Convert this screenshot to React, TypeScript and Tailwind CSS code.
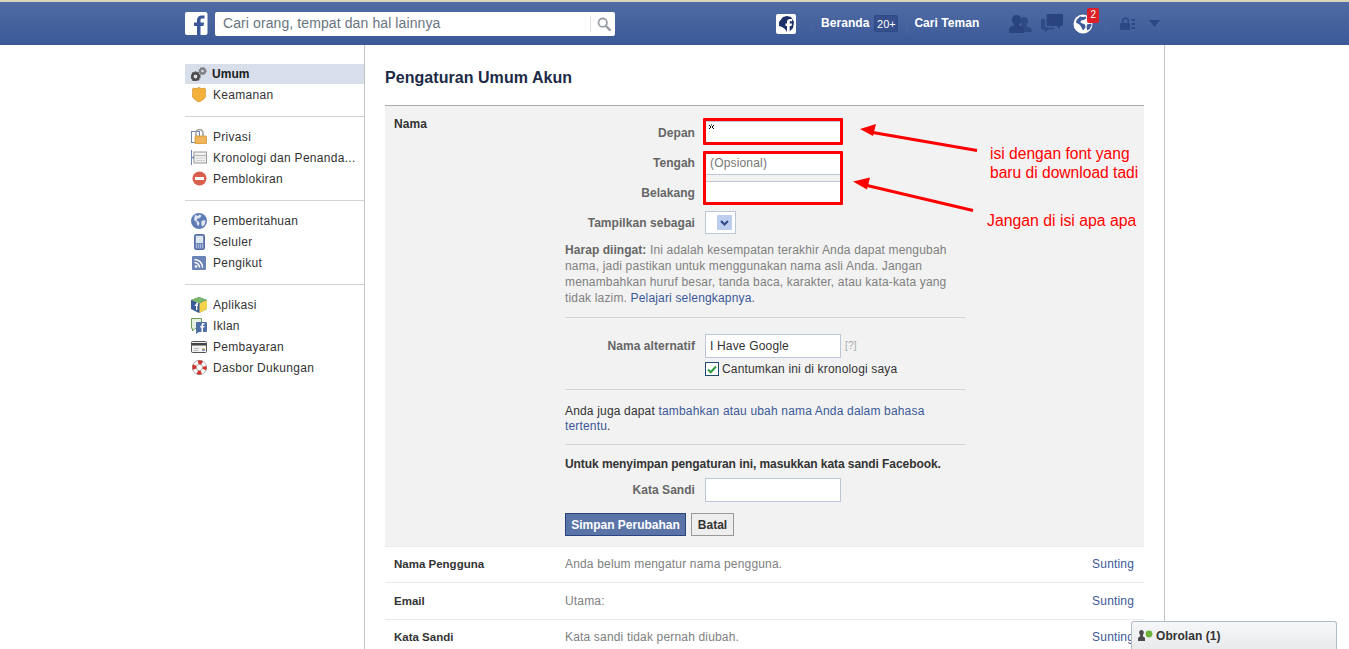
import React from "react";

type IP = { className?: string };

const FbLogo = () => (
  <svg width="23" height="23" viewBox="0 0 23 23" className="shrink-0">
    <rect x="0" y="0" width="22.5" height="23" rx="2" fill="#fff" />
    <path d="M15.5 23v-9h3l.5-3.5h-3.5V8.3c0-1 .3-1.7 1.8-1.7H19.5V3.5c-.4 0-1.500-.1-2.800-.1-2.800 0-4.700 1.700-4.700 4.600v2.500H9V14h3v9z" fill="#3b5998" />
  </svg>
);

const FbGlobe = () => (
  <svg width="20" height="20" viewBox="0 0 20 20" className="shrink-0">
    <rect width="20" height="20" rx="2" fill="#fff" />
    <path d="M3 8l4-5 4-1 4 1 3 5-1 6-3 3-3 1-2-3-3-2-3-1z" fill="#1c2f66" />
    <path d="M11 19v-7H9.500V9.500H11V8c0-2 1.200-3 3-3h2v2.300h-1.300c-.8 0-1 .4-1 1.100v1.100H16l-.4 2.500h-1.900v7z" fill="#fff" />
  </svg>
);

const Friends = () => (
  <svg width="23" height="19" viewBox="0 0 23 19" className="shrink-0">
    <path d="M15 3c2.500 0 4 1.600 4 4 0 1.700-.7 3-1.500 3.800v1.500c2 .8 5 1.500 5 3.700v2H14v-3l-3-2.500c.8-.4 1.500-.8 1.500-1v-1C11.800 10 11 8.700 11 7c0-2.400 1.500-4 4-4z" fill="#2f4a85" />
    <path d="M7.500 1C10.500 1 12 3 12 5.600c0 2-.8 3.400-1.700 4.300v1.700c2.300.9 4.700 1.800 4.700 4.300V19H0v-3.100c0-2.500 2.400-3.400 4.700-4.300V9.900C3.800 9 3 7.600 3 5.600 3 3 4.500 1 7.500 1z" fill="#2a4480" />
  </svg>
);

const Messages = () => (
  <svg width="22" height="20" viewBox="0 0 22 20" className="shrink-0">
    <path d="M7 0h13.500c.8 0 1.500.7 1.500 1.500v9c0 .8-.7 1.500-1.500 1.500H19v3l-3-3H7c-.8 0-1.500-.7-1.500-1.500v-9C5.500.7 6.200 0 7 0z" fill="#2a4480" />
    <path d="M1.500 5H4v6.500C4 12.500 5 13.500 6 13.500h7.500V14c0 .8-.7 1.500-1.500 1.500H7L4 19v-3.500H1.500C.7 15.500 0 14.800 0 14V6.500C0 5.700.7 5 1.500 5z" fill="#2f4a85" />
  </svg>
);

const WhiteGlobe = () => (
  <svg width="20" height="20" viewBox="0 0 20 20" className="shrink-0">
    <circle cx="10" cy="10" r="9.500" fill="#fff" />
    <path d="M7 2.500l3 .5 2.500-.5 1 1.500-2.500 2-3 .5-.5 2 2 1 2.500 1 .5 3-2.500 3-1.500-3-1.500-2.500L3 8.500 3.500 6z" fill="#3f5c9a" />
    <path d="M14 10.500l4-1 .7 1.500-2 4-2.500 1.500-.5-3z" fill="#3f5c9a" />
  </svg>
);

const LockMenu = () => (
  <svg width="16" height="13" viewBox="0 0 16 13" className="shrink-0">
    <path d="M3 6V4a3.500 3.500 0 017 0v2H8.500V4a2 2 0 00-4 0v2z" fill="#2c4884" />
    <rect x="1" y="6" width="10" height="7" rx="1" fill="#2c4884" />
    <path d="M12.500 2H16v2h-3.500zM12.500 6H16v2h-3.500zM12.500 10H16v2h-3.500z" fill="#2c4884" />
  </svg>
);

const Caret = () => (
  <svg width="11" height="7" viewBox="0 0 11 7" className="shrink-0">
    <path d="M0 0h11L5.500 7z" fill="#2c4884" />
  </svg>
);

const SearchIcon = () => (
  <svg width="14" height="14" viewBox="0 0 14 14" className="shrink-0">
    <circle cx="5.700" cy="5.700" r="4.200" fill="none" stroke="#9aa0a8" strokeWidth="1.800" />
    <path d="M8.800 8.800l4 4" stroke="#9aa0a8" strokeWidth="2.400" strokeLinecap="round" />
  </svg>
);

const Gears = () => (
  <svg width="16" height="14" viewBox="0 0 16 14">
    <circle cx="4.500" cy="9.500" r="3.200" fill="none" stroke="#4a4a4a" strokeWidth="2.600" />
    <circle cx="4.500" cy="9.500" r="4.600" fill="none" stroke="#4a4a4a" strokeWidth="1.200" strokeDasharray="1.500 1.400" />
    <circle cx="11.500" cy="4" r="2.400" fill="none" stroke="#7f7f7f" strokeWidth="2.200" />
    <circle cx="11.500" cy="4" r="3.700" fill="none" stroke="#7f7f7f" strokeWidth="1" strokeDasharray="1.300 1.100" />
  </svg>
);

const Shield = () => (
  <svg width="14" height="15" viewBox="0 0 14 15">
    <path d="M1.500 1L4 1.800 7 .5l3 1.300L12.500 1 14 3c-1 1.500-1 2.500-.3 4.500.7 3-2.700 5.500-6.700 7.500-4-2-7.400-4.500-6.700-7.500C1 5.500 1 4.500 0 3z" fill="#f3b13c" stroke="#c98a22" strokeWidth=".7" />
  </svg>
);

const Lock = () => (
  <svg width="16" height="15" viewBox="0 0 16 15">
    <rect x=".5" y="2.500" width="8" height="11" fill="#fff" stroke="#6d84b4" />
    <path d="M5 7V4a3.500 3.500 0 017 0v3" fill="none" stroke="#9a9a9a" strokeWidth="1.500" />
    <rect x="4" y="7" width="11.500" height="8" rx="1" fill="#f0b55a" stroke="#c98a22" strokeWidth=".7" />
  </svg>
);

const Timeline = () => (
  <svg width="16" height="15" viewBox="0 0 16 15">
    <path d="M.5 0v15" stroke="#6d84b4" />
    <rect x="3" y="2" width="12.500" height="11" fill="#f0f0f0" stroke="#999" />
    <path d="M3 5.500h12.500" stroke="#b4b4b4" />
    <path d="M5 8h9M5 10.500h9" stroke="#d0d0d0" />
    <path d="M3 6L.5 7.500 3 9z" fill="#6d84b4" />
  </svg>
);

const Block = () => (
  <svg width="15" height="15" viewBox="0 0 15 15">
    <circle cx="7.500" cy="7.500" r="7" fill="#d9604c" />
    <rect x="3" y="6" width="9" height="3" fill="#fff" />
  </svg>
);

const BlueGlobe = () => (
  <svg width="16" height="16" viewBox="0 0 16 16">
    <circle cx="8" cy="8" r="8" fill="#5f7cb6" />
    <path d="M4 2l3 1 1.500-1.500 2 1L9 5 6.500 5.500 5.500 7.500l2 1 1 2-1 2.500-1.500-1.500L5.500 9 3 7l.5-3zM10.500 8l3-1 1 1.500-1 3.500-2.500 1.500-.7-2.500z" fill="#dfe5f1" />
  </svg>
);

const Phone = () => (
  <svg width="11" height="16" viewBox="0 0 11 16">
    <rect x=".5" y=".5" width="10" height="15" rx="1.500" fill="#6f88bb" stroke="#5a6f9e" />
    <rect x="2" y="2" width="7" height="7" fill="#dfe6f3" />
    <path d="M2 11h7M2 13h7" stroke="#dfe6f3" strokeDasharray="1 1" />
  </svg>
);

const Rss = () => (
  <svg width="14" height="14" viewBox="0 0 14 14">
    <rect width="14" height="14" rx="1" fill="#6b83b6" />
    <circle cx="4" cy="10.500" r="1.300" fill="#fff" />
    <path d="M2.500 6.500a5 5 0 015 5M2.500 3.500a8 8 0 018 8" stroke="#fff" strokeWidth="1.500" fill="none" />
  </svg>
);

const AppCube = () => (
  <svg width="16" height="16" viewBox="0 0 16 16">
    <path d="M8 0l8 3v9l-8 4-8-4V3z" fill="#3a5a9b" />
    <path d="M8 0l8 3-8 3.500L0 3z" fill="#7cb86a" />
    <path d="M8.500 6.500L16 3v9l-7.500 4z" fill="#f5d34a" />
    <path d="M5 13V9H3.800V7.500H5c0-1.500.7-2 2-2v1.300c-.6 0-.7.2-.7.700H7V9h-.7v4z" fill="#fff" />
  </svg>
);

const Ads = () => (
  <svg width="16" height="16" viewBox="0 0 16 16">
    <path d="M.5.500h10v10H4L1.500 13v-2.500h-1z" fill="#e6f0df" stroke="#6f9a58" />
    <rect x="5" y="4" width="11" height="10" rx="1" fill="#4f6ea8" />
    <path d="M5 14v2l3-2z" fill="#4f6ea8" />
    <path d="M10.500 14V9.500H9.300V8h1.200V6.800c0-1.200.8-1.800 1.800-1.800h1.200v1.500h-.8c-.5 0-.7.2-.7.600V8h1.500l-.2 1.500H12V14z" fill="#fff" />
  </svg>
);

const Card = () => (
  <svg width="16" height="12" viewBox="0 0 16 12">
    <rect x=".5" y=".5" width="15" height="11" rx="1" fill="#f2f2f2" stroke="#555" />
    <rect x="1" y="2" width="14" height="2.500" fill="#444" />
    <path d="M3 7.500h5M3 9.500h4" stroke="#bbb" />
    <rect x="11" y="7.500" width="3" height="1" fill="#e4a11b" />
    <rect x="11" y="8.500" width="3" height="1" fill="#2c55a0" />
  </svg>
);

const Lifebuoy = () => (
  <svg width="15" height="15" viewBox="0 0 15 15">
    <circle cx="7.500" cy="7.500" r="5.200" fill="none" stroke="#fff" strokeWidth="4" />
    <circle cx="7.500" cy="7.500" r="5.200" fill="none" stroke="#d8332b" strokeWidth="4" strokeDasharray="4.100 4.070" strokeDashoffset="2.050" />
    <circle cx="7.500" cy="7.500" r="7.200" fill="none" stroke="#666" strokeWidth=".5" />
    <circle cx="7.500" cy="7.500" r="3.200" fill="none" stroke="#666" strokeWidth=".5" />
  </svg>
);

const NavItem = ({ icon, label, active }: { icon: React.ReactNode; label: string; active?: boolean }) => (
  <div className={active ? "flex h-[20px] items-center bg-[#d8dfea] pl-[6px] font-bold tracking-[0.05px] text-[#1c1c1c]" : "flex h-[21px] items-center pl-[6px] text-[#333]"}>
    <span className={active ? "mr-[5px] flex w-[16px] justify-center" : "mr-[6px] flex w-[16px] justify-center"}>{icon}</span>
    <span className="truncate">{label}</span>
  </div>
);

const Hr = ({ className }: IP) => <div className={`h-px bg-[#d3d3d3] ${className ?? ""}`} />;

const inputCls = "block h-[24px] w-[136px] border border-[#bdc7d8] bg-white px-[4px] text-[#333]";

const FormRow = ({ label, children }: { label: string; children: React.ReactNode }) => (
  <div className="flex items-center">
    <div className="w-[130px] text-right font-bold tracking-[0.05px] text-[#666]">{label}</div>
    <div className="ml-[10px]">{children}</div>
  </div>
);

const InfoRow = ({ label, value, className }: { label: string; value: string; className: string }) => (
  <div className={`flex items-center border-b border-[#e9e9e9] pl-[9px] pr-[10px] ${className}`}>
    <div className="w-[171px] text-[11.500px] font-bold tracking-normal text-[#333]">{label}</div>
    <div className="flex-1 text-[#808080]">{value}</div>
    <div className="text-[#3b5998]">Sunting</div>
  </div>
);

export default function App() {
  return (
    <div className="relative h-[649px] w-full overflow-hidden bg-white text-[12px] leading-[16px] tracking-[0.17px] [font-family:'Liberation_Sans',Arial,sans-serif]">
      <header className="flex h-[45px] items-center border-t-2 border-[#d8d6bd] bg-gradient-to-b from-[#516ca4] to-[#3b5998] pl-[185px]">
        <FbLogo />
        <div className="ml-[7px] flex h-[24px] w-[400px] items-center rounded-[2px] bg-white pl-[8px] pr-[1px]">
          <span className="flex-1 pb-[2px] text-[14px] tracking-[0.1px] text-[#6a7480]">Cari orang, tempat dan hal lainnya</span>
          <span className="flex h-[16px] items-center border-l border-[#e0e0e0] pl-[6px] pr-[3px]"><SearchIcon /></span>
        </div>
        <div className="ml-[161px]"><FbGlobe /></div>
        <div className="ml-[15px] h-[20px] w-px bg-[#4a66a0]" />
        <span className="ml-[9px] pb-[2px] font-bold tracking-[0.05px] text-white">Beranda</span>
        <span className="ml-[5px] flex h-[17px] w-[24px] items-center justify-center rounded-[2px] border border-[#2f4a86] bg-[#344f8c] text-[11px] tracking-normal text-white">20+</span>
        <div className="ml-[8px] h-[20px] w-px bg-[#4a66a0]" />
        <span className="ml-[7px] pb-[2px] font-bold tracking-[0.05px] text-white">Cari Teman</span>
        <div className="ml-[30px]"><Friends /></div>
        <div className="ml-[9px]"><Messages /></div>
        <div className="relative ml-[10px]">
          <WhiteGlobe />
          <span className="absolute left-[14px] top-[-6px] flex h-[15px] w-[12px] items-center justify-center rounded-[2px] bg-[#dd2027] text-[10px] tracking-normal text-white">2</span>
        </div>
        <div className="ml-[12px] h-[20px] w-px bg-[#4a66a0]" />
        <div className="ml-[13px]"><LockMenu /></div>
        <div className="ml-[14px]"><Caret /></div>
      </header>

      <div className="flex pl-[185px]">
        <aside className="w-[179px] pt-[19px] tracking-[0.3px]">
          <NavItem active icon={<Gears />} label="Umum" />
          <NavItem icon={<Shield />} label="Keamanan" />
          <Hr className="mt-[11px] mb-[9px]" />
          <NavItem icon={<Lock />} label="Privasi" />
          <NavItem icon={<Timeline />} label="Kronologi dan Penanda..." />
          <NavItem icon={<Block />} label="Pemblokiran" />
          <Hr className="mt-[11px] mb-[9px]" />
          <NavItem icon={<BlueGlobe />} label="Pemberitahuan" />
          <NavItem icon={<Phone />} label="Seluler" />
          <NavItem icon={<Rss />} label="Pengikut" />
          <Hr className="mt-[11px] mb-[9px]" />
          <NavItem icon={<AppCube />} label="Aplikasi" />
          <NavItem icon={<Ads />} label="Iklan" />
          <NavItem icon={<Card />} label="Pembayaran" />
          <NavItem icon={<Lifebuoy />} label="Dasbor Dukungan" />
        </aside>

        <main className="h-[604px] w-[801px] border-x border-[#c4c4c4] px-[20px]">
          <h1 className="h-[60px] pt-[21px] text-[16px] font-bold leading-[24px] tracking-[0.05px] text-[#1c2a47]">Pengaturan Umum Akun</h1>

          <section className="flex h-[442px] border-y border-t-[#aaaaaa] border-b-[#e9e9e9] bg-[#f2f2f2] pl-[9px] pt-[10px]">
            <div className="w-[171px] font-bold tracking-[0.05px] text-[#333]">Nama</div>
            <div className="w-[400px] pt-[5px]">
              <div className="flex flex-col gap-[6px]">
                <FormRow label="Depan"><div className={inputCls} /></FormRow>
                <FormRow label="Tengah"><div className={`${inputCls} leading-[22px] text-[#777]`}>(Opsional)</div></FormRow>
                <FormRow label="Belakang"><div className={inputCls} /></FormRow>
                <FormRow label="Tampilkan sebagai">
                  <div className="flex h-[23px] w-[31px] items-center justify-end border border-[#bdc7d8] bg-white pr-[3px]">
                    <span className="flex h-[15px] w-[15px] items-center justify-center rounded-[1px] bg-[#bccdee]">
                      <svg width="9" height="6" viewBox="0 0 9 6"><path d="M1 1l3.500 3.500L8 1" fill="none" stroke="#2f4a86" strokeWidth="2" /></svg>
                    </span>
                  </div>
                </FormRow>
              </div>

              <p className="mt-[8px] text-[#808080]"><b className="tracking-[0.05px] text-[#666]">Harap diingat:</b> Ini adalah kesempatan terakhir Anda dapat mengubah nama, jadi pastikan untuk menggunakan nama asli Anda. Jangan menambahkan huruf besar, tanda baca, karakter, atau kata-kata yang tidak lazim. <span className="text-[#3b5998]">Pelajari selengkapnya.</span></p>
              <Hr className="mt-[11px] mb-[16px]" />

              <div className="flex items-center">
                <div className="w-[130px] text-right font-bold tracking-[0.05px] text-[#666]">Nama alternatif</div>
                <div className={`ml-[10px] ${inputCls} leading-[22px]`}>I Have Google</div>
                <span className="ml-[4px] text-[10px] text-[#aaa]">[?]</span>
              </div>
              <div className="ml-[140px] mt-[3px] flex h-[16px] items-center">
                <span className="flex h-[14px] w-[14px] items-center justify-center border border-[#1f4a77] bg-white">
                  <svg width="10" height="9" viewBox="0 0 10 9"><path d="M1 4.500l2.700 2.700L9 1.500" fill="none" stroke="#2b9a3a" strokeWidth="2" /></svg>
                </span>
                <span className="ml-[3px] whitespace-nowrap text-[#333]">Cantumkan ini di kronologi saya</span>
              </div>
              <Hr className="mt-[12px] mb-[14px]" />

              <p className="leading-[15px] text-[#333]">Anda juga dapat <span className="text-[#3b5998]">tambahkan atau ubah nama Anda dalam bahasa tertentu</span>.</p>
              <Hr className="mt-[10px] mb-[11px]" />

              <p className="whitespace-nowrap font-bold tracking-[-0.07px] text-[#333]">Untuk menyimpan pengaturan ini, masukkan kata sandi Facebook.</p>
              <div className="mt-[6px]">
                <FormRow label="Kata Sandi"><div className={inputCls} /></FormRow>
              </div>
              <div className="mt-[11px] flex gap-[5px]">
                <button className="h-[23px] w-[121px] border border-[#29447e] bg-[#5b74a8] font-bold tracking-normal text-white">Simpan Perubahan</button>
                <button className="h-[23px] w-[43px] border border-[#999] bg-[#eeeeee] font-bold tracking-normal text-[#333]">Batal</button>
              </div>
            </div>
          </section>

          <InfoRow label="Nama Pengguna" value="Anda belum mengatur nama pengguna." className="h-[36px] pb-[1px]" />
          <InfoRow label="Email" value="Utama:" className="h-[37px]" />
          <InfoRow label="Kata Sandi" value="Kata sandi tidak pernah diubah." className="h-[37px] pb-[2px]" />
        </main>
      </div>

      {/* red annotations drawn on top of the screenshot */}
      <div className="absolute left-[703px] top-[118px] h-[27px] w-[140px] rounded-[1px] border-[3px] border-[#ff0000]" />
      <div className="absolute left-[703px] top-[151px] h-[54px] w-[140px] rounded-[1px] border-[3px] border-[#ff0000]" />
      <svg className="absolute left-[708px] top-[124px]" width="7" height="6" viewBox="0 0 7 6"><path d="M1 1l2 2-2 2M6 1L4 3l2 2M3 1h1" fill="none" stroke="#000" /></svg>
      <svg className="absolute left-[850px] top-[120px]" width="140" height="100" viewBox="0 0 140 100">
        <path d="M127 30.500L20 12" stroke="#ff0000" strokeWidth="3" />
        <path d="M10 9l16-5-3 12z" fill="#ff0000" />
        <path d="M123 90.500L15 65" stroke="#ff0000" strokeWidth="3" />
        <path d="M3 61.500l17-4-3 12z" fill="#ff0000" />
      </svg>
      <div className="absolute left-[990px] top-[144px] w-[155px] text-[15.600px] leading-[19px] tracking-normal text-[#ff0000]">isi dengan font yang baru di download tadi</div>
      <div className="absolute left-[987px] top-[211px] whitespace-nowrap text-[15.800px] leading-[19px] tracking-normal text-[#ff0000]">Jangan di isi apa apa</div>

      <div className="absolute bottom-0 left-[1131px] flex h-[28px] w-[206px] items-center rounded-t-[3px] border border-b-0 border-[#b5bcc9] bg-gradient-to-b from-[#f6f7f9] to-[#e9eaed] pl-[6px]">
        <svg width="15" height="12" viewBox="0 0 15 12"><path d="M3.500 0c1.500 0 2.300 1 2.300 2.500 0 1-.4 2-.9 2.500v1.500c1 .5 2.100.8 2.100 2V11H0V8.500c0-1.200 1.100-1.500 2.100-2V5c-.5-.5-.9-1.500-.9-2.500C1.200 1 2 0 3.500 0z" fill="#4b4b4b" /><circle cx="11" cy="4" r="3.400" fill="#6bb33a" /></svg>
        <span className="ml-[3px] font-bold tracking-[0.05px] text-[#333]">Obrolan (1)</span>
      </div>
    </div>
  );
}
